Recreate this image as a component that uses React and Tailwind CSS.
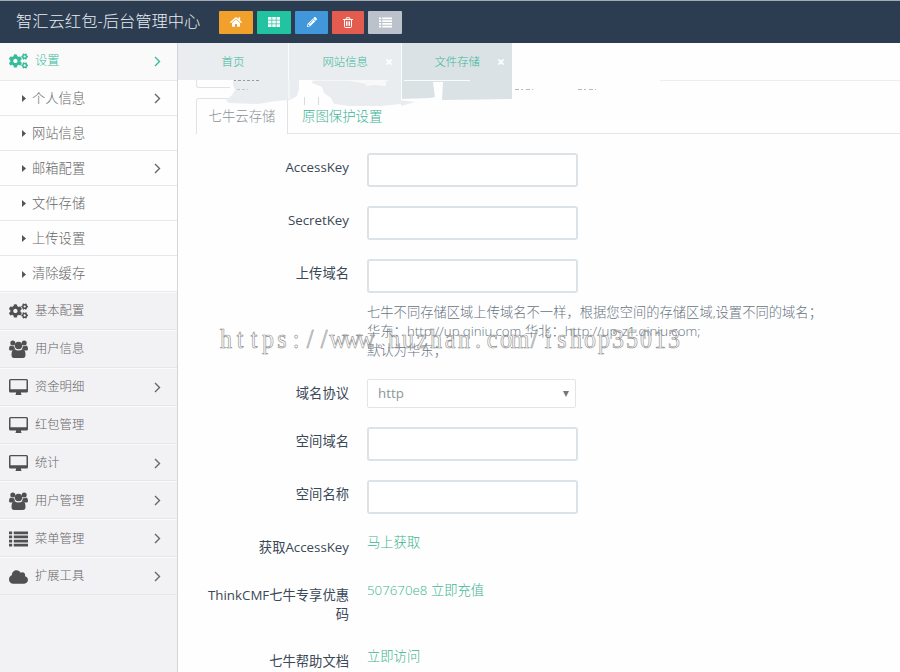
import React, { useState } from 'react';
import { FaCloud, FaCogs, FaHome, FaPencilAlt } from 'react-icons/fa';

const ListIcon = ({ className = 'h-[11px] w-[13px]' }) => (
  <svg viewBox="0 0 18 15" fill="currentColor" className={className}>
    <path d="M0 .5h3v2.600H0zM4.500 .5H18v2.600H4.500zM0 4.300h3v2.600H0zM4.500 4.300H18v2.600H4.500zM0 8.100h3v2.600H0zM4.500 8.100H18v2.600H4.500zM0 11.900h3v2.600H0zM4.500 11.900H18v2.600H4.500z" />
  </svg>
);

const GridIcon = () => (
  <svg width="12" height="10" viewBox="0 0 12 10" fill="currentColor">
    <path d="M0 0h3.500v2.800H0zM4.250 0h3.500v2.800h-3.500zM8.500 0H12v2.800H8.500zM0 3.600h3.500v2.800H0zM4.250 3.600h3.500v2.800h-3.500zM8.500 3.600H12v2.800H8.500zM0 7.200h3.500V10H0zM4.250 7.200h3.500V10h-3.500zM8.500 7.200H12V10H8.500z" />
  </svg>
);

const TrashIcon = () => (
  <svg
    width="10"
    height="11"
    viewBox="0 0 10 11"
    fill="none"
    stroke="currentColor"
  >
    <path d="M0 2.500h10M3 2.300l.5-1.600h3L7 2.300M1.500 2.800v6.700q0 1 1 1h5q1 0 1-1V2.800M3.500 4.300v4.500M5 4.300v4.500M6.500 4.300v4.500" />
  </svg>
);

const DesktopIcon = ({ className }) => (
  <svg viewBox="0 0 19 18" fill="currentColor" className={className}>
    <path
      fillRule="evenodd"
      d="M1.500 1h16q1.500 0 1.500 1.500v10.500q0 1.500-1.500 1.500H12v1.300l.7 1.200H6.300l.7-1.200v-1.300H1.500Q0 14.500 0 13V2.500Q0 1 1.500 1zm0 1.300v9h16v-9z"
    />
  </svg>
);

const UsersIcon = ({ className }) => (
  <svg viewBox="0 0 19 18" fill="currentColor" className={className}>
    <circle cx="3.800" cy="3" r="2.500" />
    <circle cx="15.200" cy="3" r="2.500" />
    <circle cx="9.500" cy="5.500" r="3.700" />
    <path d="M1.500 5.500q2 1 3.700.5 0 2 1.200 3.500H5L3.700 10.500H1.500Q0 10.500 0 9q0-3 1.500-3.500zM17.500 5.500q-2 1-3.700.5 0 2-1.200 3.500H14l1.300 1h2.200Q19 10.500 19 9q0-3-1.500-3.500z" />
    <path d="M5.500 9.300q4 2.500 8 0Q16.500 9.500 16.500 15q0 3-2.500 3H5q-2.500 0-2.500-3 0-5.500 3-5.700z" />
  </svg>
);

const shortcuts = [
  { icon: <FaHome size={12} />, className: 'w-[34px] bg-[#f1a02b]' },
  { icon: <GridIcon />, className: 'w-[34px] bg-[#22c3a1]' },
  { icon: <FaPencilAlt size={10} />, className: 'w-[33px] bg-[#4297da]' },
  { icon: <TrashIcon />, className: 'w-[32px] bg-[#e45c50]' },
  { icon: <ListIcon />, className: 'w-[34px] bg-[#bcc2cb]' },
];

const settingItems = [
  { name: '个人信息', arrow: true },
  { name: '网站信息' },
  { name: '邮箱配置', arrow: true },
  { name: '文件存储' },
  { name: '上传设置' },
  { name: '清除缓存' },
];

const menuItems = [
  { name: '基本配置', icon: FaCogs },
  { name: '用户信息', icon: UsersIcon },
  { name: '资金明细', icon: DesktopIcon, arrow: true },
  { name: '红包管理', icon: DesktopIcon },
  { name: '统计', icon: DesktopIcon, arrow: true },
  { name: '用户管理', icon: UsersIcon, arrow: true },
  { name: '菜单管理', icon: ListIcon, arrow: true },
  { name: '扩展工具', icon: FaCloud, arrow: true },
];

const watermark = 'https://www.huzhan.com/ishop35013';

const Chevron = () => (
  <svg width="7" height="11" viewBox="0 0 7 11" fill="none" className="ml-auto">
    <path d="M1 1l4.500 4.500L1 10" stroke="currentColor" strokeWidth="1.400" />
  </svg>
);

const Caret = () => (
  <svg width="4" height="7" viewBox="0 0 4 7" fill="#555">
    <path d="M0 0l4 3.500L0 7z" />
  </svg>
);

const Header = () => (
  <header className="flex h-[43px] shrink-0 items-center border-t border-[#a5abb3] bg-[#2d3d51] pl-4">
    <h1 className="-mt-[2px] w-[203px] text-[16.3px] leading-none whitespace-nowrap text-[#e8ecf0]">
      智汇云红包-后台管理中心
    </h1>
    <div className="flex gap-1">
      {shortcuts.map(({ icon, className }, i) => (
        <button
          key={i}
          className={`flex h-[23px] items-center justify-center rounded-[1px] text-white ${className}`}
        >
          {icon}
        </button>
      ))}
    </div>
  </header>
);

const Sidebar = () => (
  <aside className="w-[178px] shrink-0 border-r border-[#d5d4d9] bg-[#f2f1f4] text-[#666]">
    <div className="flex h-[37.5px] items-center border-b border-[#e9e8ed] bg-[#fafafb] pr-[16px] pl-[9px] text-[12.3px] text-[#35bd9b]">
      <FaCogs className="mr-[7px] h-[18px] w-[19px]" />
      设置
      <Chevron />
    </div>

    {/* Settings submenu */}
    <ul className="h-[211.500px] bg-[#fefefe] pt-[0.500px] text-[13.3px]">
      {settingItems.map(item => (
        <li
          key={item.name}
          className="flex h-[35.100px] items-center gap-[6px] border-b border-[#e8e7ec] pt-[1px] pr-[16px] pl-[22px]"
        >
          <Caret />
          {item.name}
          {item.arrow && <Chevron />}
        </li>
      ))}
    </ul>

    <ul className="text-[12.3px]">
      {menuItems.map(({ name, icon: Icon, arrow }) => (
        <li
          key={name}
          className="flex h-[37.900px] items-center border-t border-b border-t-[#fbfbfc] border-b-[#e6e5ea] pt-[1px] pr-[16px] pl-[9px]"
        >
          <Icon className="mr-[7px] h-[18px] w-[19px] text-[#505050]" />
          {name}
          {arrow && <Chevron />}
        </li>
      ))}
    </ul>
  </aside>
);

const CloseMark = () => (
  <svg width="6" height="6" viewBox="0 0 6 6">
    <path d="M.5 .5l5 5M5.500 .5l-5 5" stroke="#fff" strokeWidth="1.700" />
  </svg>
);

const PageTabs = () => (
  <nav className="relative flex h-[37px] text-[11.4px] text-[#3cb898]">
    <div className="flex w-[111px] items-center justify-center border-r border-[#fafcfc] bg-[#e9edf0] pt-[1px]">
      首页
    </div>
    <div className="flex w-[113px] items-center justify-end gap-[18px] border-r border-[#fafcfc] bg-[#e9edf0] pt-[1px] pr-[9px]">
      网站信息 <CloseMark />
    </div>
    <div className="flex w-[110px] items-center justify-end gap-[18px] bg-[#dbe2e6] pt-[1px] pr-[8px]">
      文件存储 <CloseMark />
    </div>

    {/* Brush strokes hanging under the tab strip */}
    <svg
      width="500"
      height="30"
      viewBox="178 79 500 30"
      className="absolute top-[36px] left-0"
    >
      <path
        d="M233 80h66v9l-2 7-7 4-14 1-18 3-29-1-3-3 6-5 3-5-2-5zM313 80h88v24l-20 2-32 0-15-2-3-6-7-5-2-6-10-4zM401 100l14 2-14 4z"
        fill="#e9edf0"
      />
      <path
        d="M350 80h36v6l-12-1-9 1 2-2-17-3zM313 80h76v.8h-76z"
        fill="#f8fafa"
      />
      <path
        d="M402 80h110v19l-30 .5-40 .5 1-18h-10l2 15-5 1-28 1z"
        fill="#dbe2e6"
      />
      <path d="M404 80.500h66M289 80v19M401.500 80v21" stroke="#fafcfc" />
      <path d="M234 80.500h27" stroke="#989c9f" strokeDasharray="2 2 3 2" />
      <path d="M237 89.500h11" stroke="#c2c6c8" strokeDasharray="3 2" />
      <path
        d="M515 89.500h18M578 89.500h18"
        stroke="#b6babd"
        strokeDasharray="4 2 2 3"
      />
      <path d="M304.500 97v8M318.500 97v8" stroke="#d9dcdf" />
    </svg>
  </nav>
);

const Row = ({ label, height, children }) => (
  <div className={`flex gap-[18px] ${height}`}>
    <label className="w-[153px] shrink-0 pt-[5px] pl-[6px] text-right font-normal text-[#3a4857]">
      {label}
    </label>
    <div className="text-[#3cb392]">{children}</div>
  </div>
);

const TextInput = ({ value, onChange }) => (
  <input
    type="text"
    value={value}
    onChange={onChange}
    className="block h-[34px] w-[211px] rounded-[3px] border-2 border-[#dce3e8] bg-white px-2 outline-none"
  />
);

const StorageForm = () => {
  const [form, setForm] = useState({
    accessKey: '',
    secretKey: '',
    uploadHost: '',
    domain: '',
    bucket: '',
  });

  const field = name => ({
    value: form[name],
    onChange: e => setForm({ ...form, [name]: e.target.value }),
  });

  return (
    <form className="pt-[19px] pl-[18px] text-[13.3px] leading-[19px]">
      <Row label="AccessKey" height="h-[53px]">
        <TextInput {...field('accessKey')} />
      </Row>
      <Row label="SecretKey" height="h-[53px]">
        <TextInput {...field('secretKey')} />
      </Row>
      <Row label="上传域名" height="h-[120px]">
        <TextInput {...field('uploadHost')} />
        <p className="pt-[10px] whitespace-nowrap text-[#667381]">
          七牛不同存储区域上传域名不一样，根据您空间的存储区域,设置不同的域名；
          <br />
          华东：http://up.qiniu.com 华北：http://up-z1.qiniu.com;
          <br />
          默认为华东；
        </p>
      </Row>
      <Row label="域名协议" height="h-[48px]">
        <div className="flex h-[29px] w-[209px] items-center justify-between rounded-[2px] border border-[#e3e3e8] bg-white pr-[6px] pl-[10px] font-normal text-[#8b9697]">
          http
          <svg width="6" height="6" viewBox="0 0 6 6" fill="#777">
            <path d="M0 0h6L3 6z" />
          </svg>
        </div>
      </Row>
      <Row label="空间域名" height="h-[53px]">
        <TextInput {...field('domain')} />
      </Row>
      <Row label="空间名称" height="h-[53px]">
        <TextInput {...field('bucket')} />
      </Row>
      <Row label="获取AccessKey" height="h-[48px]">
        <a href="#">马上获取</a>
      </Row>
      <Row label="ThinkCMF七牛专享优惠码" height="h-[66px]">
        <a href="#">507670e8 立即充值</a>
      </Row>
      <Row label="七牛帮助文档" height="h-[26px]">
        <a href="#">立即访问</a>
      </Row>
    </form>
  );
};

// Outlined serif text on a fixed 14px pitch
const Watermark = () => (
  <svg
    width="470"
    height="34"
    className="pointer-events-none absolute top-[322px] left-[219px]"
  >
    <text
      x={watermark.split('').map((_, i) => 7 + i * 14).join(' ')}
      y="22.500"
      textAnchor="middle"
      transform="scale(1 1.15)"
      fill="none"
      stroke="#8f8f8f"
      strokeWidth="0.600"
      className="font-['Liberation_Serif',serif] text-[24px] font-normal"
    >
      {watermark}
    </text>
  </svg>
);

const App = () => {
  return (
    <div className="relative flex h-[672px] w-[900px] flex-col overflow-hidden bg-[#fefefe] font-['Open_Sans','Noto_Sans_CJK_SC',sans-serif] font-light">
      <Header />
      <div className="flex min-h-0 flex-1">
        <Sidebar />
        <main className="min-w-0 flex-1">
          <PageTabs />

          {/* Remains of the first tab row */}
          <div className="flex h-[18px] items-start justify-between pl-[18px]">
            <div className="h-[8px] w-[34px] rounded-bl-[3px] border-b border-l border-[#e1e2e6]" />
            <div className="w-[240px] border-t border-[#eeeef1]" />
          </div>

          <div className="flex h-[36px] text-[13.4px]">
            <div className="w-[18px]" />
            <div className="flex w-[92px] items-center justify-center rounded-t-[3px] border-t border-r border-l border-[#e1e2e6] text-[#8d9298]">
              七牛云存储
            </div>
            <div className="flex flex-1 items-center border-b border-[#e6e6ea] pt-[1px] pl-[14px] text-[#3cb392]">
              原图保护设置
            </div>
          </div>

          <StorageForm />
        </main>
      </div>

      <Watermark />
    </div>
  );
};

export default App;
